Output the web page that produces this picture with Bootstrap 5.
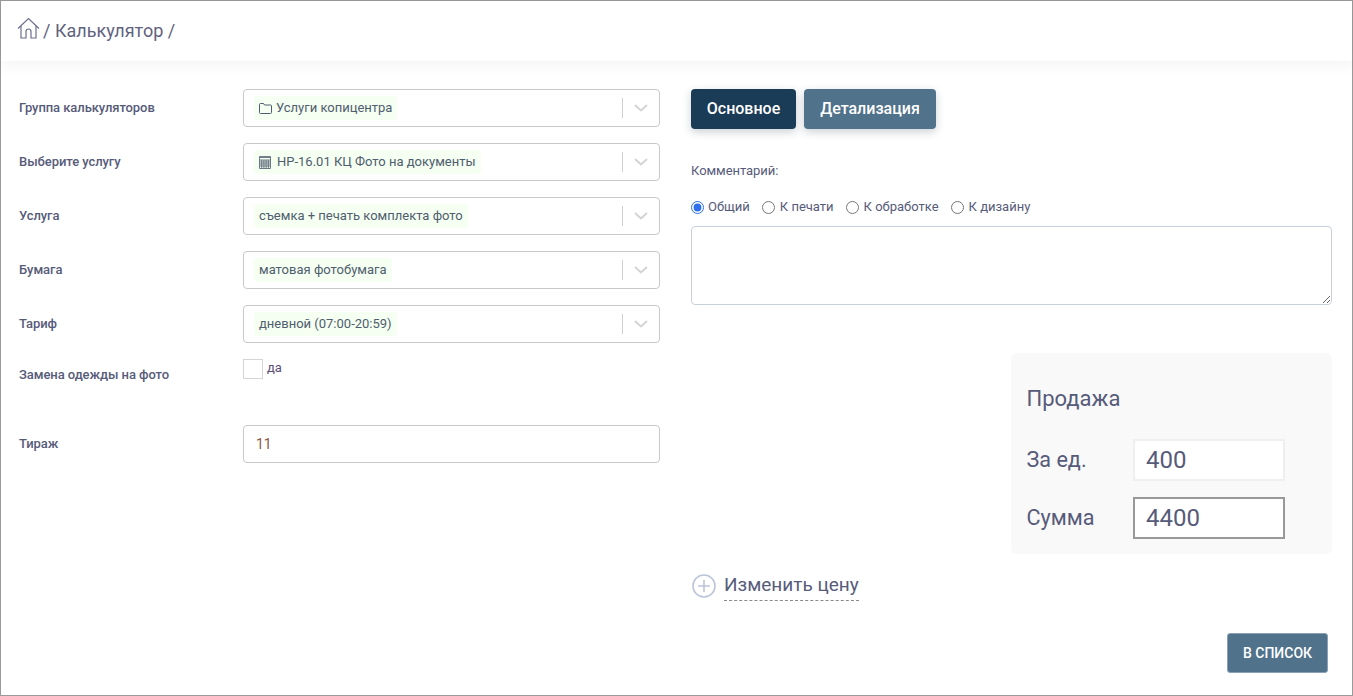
<!DOCTYPE html>
<html lang="ru">
<head>
    <meta charset="UTF-8">
    <meta name="viewport" content="width=device-width, initial-scale=1.0">
    <title>Калькулятор</title>
    <link href="https://cdn.jsdelivr.net/npm/bootstrap@5.3.0/dist/css/bootstrap.min.css" rel="stylesheet">
    <style>
        html, body { height: 100%; }
        body { font-family: Roboto, "Liberation Sans", sans-serif; color: #575962; background: #fff; overflow: hidden; }
        .page-frame { width: 1353px; height: 696px; border: 1px solid #9a9a9a; display: flex; flex-direction: column; }
        .top-bar { height: 60px; flex: none; padding: 0 0 2px 16px; box-shadow: 0 1px 15px 1px rgba(69,65,78,.08); font-size: 18px; color: #5f6380; gap: 3px; }
        .top-bar svg { display: block; margin-top: -3px; }
        .main-area { padding: 28px 20px 0 18px; gap: 31px; flex: 1; }
        .left-side { width: 641px; flex: none; }
        .right-side { width: 641px; flex: none; }
        .field-row { display: flex; margin-bottom: 16px; }
        .field-label { width: 224px; flex: none; font-size: 13px; font-weight: 500; color: #575b7a; line-height: 38px; letter-spacing: -.07px; }
        .fake-select { width: 417px; height: 38px; border: 1px solid #c9c9c9; border-radius: 4px; padding: 0 11px 0 10px; }
        .sel-value { background: #f5fff2; border-radius: 4px; padding: 0 5px; height: 24px; line-height: 24px; font-size: 13px; color: #4f5d6e; gap: 4px; }
        .calc-icon { margin-right: 2px; }
        .sel-sep { width: 1px; height: 20px; background: #d0d0d0; margin-right: 11px; }
        .check-row { height: 66px; margin-bottom: 0; }
        .check-row .field-label { line-height: 20px; padding-top: 6px; }
        .box-check { width: 20px; height: 20px; border: 1px solid #d5d5d5; background: #fff; }
        .box-label { font-size: 13px; color: #5b4f78; margin-left: 4px; line-height: 18px; }
        .qty-input { width: 417px; height: 38px; border: 1px solid #c9c9c9; border-radius: 4px; font-size: 14px; color: #8a5a44; padding: 0 12px; }
        .tab-main, .tab-second { height: 40px; border: 0; border-radius: 4px; font-size: 16px; font-weight: 500; color: #fff; box-shadow: 0 3px 8px rgba(50,70,90,.25); padding: 0; }
        .tab-main { width: 105px; background: #1a3c57; }
        .tab-second { width: 132px; background: #50728a; }
        .note-label { font-size: 13px; color: #575b7a; margin-top: 34px; line-height: 16px; letter-spacing: -.05px; }
        .radio-line { margin-top: 20px; gap: 12px; font-size: 13px; color: #575b7a; height: 16px; }
        .radio-line label { display: flex; align-items: center; gap: 5px; }
        .radio-line label:first-child { gap: 4px; }
        .radio-line input { width: 13px; height: 13px; margin: 0; accent-color: #2f6fed; }
        .note-area { display: block; width: 641px; height: 79px; margin-top: 11px; border: 1px solid #c8d0dc; border-radius: 4px; }
        .sale-panel { width: 321px; height: 201px; margin: 48px 0 0 320px; background: #f9f9f9; border-radius: 6px; padding: 32px 16px 0 15.5px; color: #575b7a; }
        .sale-title { font-size: 22px; line-height: 28px; margin-bottom: 26px; }
        .sale-row { height: 42px; margin-bottom: 16px; font-size: 21.6px; }
        .sale-row span { width: 106.5px; flex: none; }
        .sale-value { width: 152px; height: 42px; background: #fff; border: 2px solid #efefef; padding-left: 11px; font-size: 24px; line-height: 38px; }
        .sale-value.is-sum { border-color: #999; }
        .price-link { margin: 15px 0 0 1px; gap: 8px; font-size: 19px; color: #575b7a; }
        .price-link svg { margin-top: 5px; }
        .price-text { border-bottom: 1px dashed #8a8a8a; line-height: 22px; padding-bottom: 4px; margin-top: 5px; }
        .back-line { padding-top: 32px; padding-right: 4px; }
        .back-btn { width: 101px; height: 40px; background: #50728a; border: 1px solid #8aa0b8; border-radius: 3px; color: #fff; font-size: 14px; font-weight: 500; padding: 0; }
    </style>
</head>
<body>
    <div class="page-frame">
        <div class="top-bar d-flex align-items-center">
            <svg width="23" height="23" viewBox="0 0 23 23" fill="none" stroke="#6b6f8c" stroke-width="1.2">
                <path d="M1 11.5 11.5 1.5 22 11.5"/>
                <path d="M4 9v12h5v-6.500a2.500 2.500 0 0 1 5 0V21h5V9"/>
            </svg>
            <span>/ Калькулятор /</span>
        </div>

        <div class="main-area d-flex">
            <div class="left-side">
                <div class="field-row">
                    <div class="field-label">Группа калькуляторов</div>
                    <div class="fake-select d-flex align-items-center justify-content-between">
                        <div class="sel-value d-flex align-items-center">
                            <svg width="13" height="11" viewBox="0 0 13 11" fill="none" stroke="#4f5d6e"><path d="M.5 9.500v-8a1 1 0 0 1 1-1h3l1 1.500h6a1 1 0 0 1 1 1v6.500a1 1 0 0 1-1 1h-10a1 1 0 0 1-1-1z"/></svg>
                            Услуги копицентра
                        </div>
                        <div class="d-flex align-items-center">
                            <div class="sel-sep"></div>
                            <svg width="14" height="8" viewBox="0 0 14 8" fill="none" stroke="#d4d4d4" stroke-width="2"><path d="M1 1l6 5.500L13 1"/></svg>
                        </div>
                    </div>
                </div>
                <div class="field-row">
                    <div class="field-label">Выберите услугу</div>
                    <div class="fake-select d-flex align-items-center justify-content-between">
                        <div class="sel-value d-flex align-items-center">
                            <svg class="calc-icon" width="12" height="13" viewBox="0 0 12 13" fill="none" stroke="#4f5d6e" stroke-width=".8"><path d="M.5.500h11v12H.5zM.5 1.500h11M.5 4h11M.5 6h11M.5 8h11M.5 10h11M2.700 4v8.500M4.900 4v8.500M7.100 4v8.500M9.300 4v8.500"/></svg>
                            НР-16.01 КЦ Фото на документы
                        </div>
                        <div class="d-flex align-items-center">
                            <div class="sel-sep"></div>
                            <svg width="14" height="8" viewBox="0 0 14 8" fill="none" stroke="#d4d4d4" stroke-width="2"><path d="M1 1l6 5.500L13 1"/></svg>
                        </div>
                    </div>
                </div>
                <div class="field-row">
                    <div class="field-label">Услуга</div>
                    <div class="fake-select d-flex align-items-center justify-content-between">
                        <div class="sel-value">съемка + печать комплекта фото</div>
                        <div class="d-flex align-items-center">
                            <div class="sel-sep"></div>
                            <svg width="14" height="8" viewBox="0 0 14 8" fill="none" stroke="#d4d4d4" stroke-width="2"><path d="M1 1l6 5.500L13 1"/></svg>
                        </div>
                    </div>
                </div>
                <div class="field-row">
                    <div class="field-label">Бумага</div>
                    <div class="fake-select d-flex align-items-center justify-content-between">
                        <div class="sel-value">матовая фотобумага</div>
                        <div class="d-flex align-items-center">
                            <div class="sel-sep"></div>
                            <svg width="14" height="8" viewBox="0 0 14 8" fill="none" stroke="#d4d4d4" stroke-width="2"><path d="M1 1l6 5.500L13 1"/></svg>
                        </div>
                    </div>
                </div>
                <div class="field-row">
                    <div class="field-label">Тариф</div>
                    <div class="fake-select d-flex align-items-center justify-content-between">
                        <div class="sel-value">дневной (07:00-20:59)</div>
                        <div class="d-flex align-items-center">
                            <div class="sel-sep"></div>
                            <svg width="14" height="8" viewBox="0 0 14 8" fill="none" stroke="#d4d4d4" stroke-width="2"><path d="M1 1l6 5.500L13 1"/></svg>
                        </div>
                    </div>
                </div>
                <div class="field-row check-row">
                    <div class="field-label">Замена одежды на фото</div>
                    <div class="box-check"></div>
                    <div class="box-label">да</div>
                </div>
                <div class="field-row">
                    <div class="field-label">Тираж</div>
                    <input class="qty-input" type="text" value="11">
                </div>
            </div>

            <div class="right-side">
                <div class="d-flex gap-2">
                    <button class="tab-main" type="button">Основное</button>
                    <button class="tab-second" type="button">Детализация</button>
                </div>
                <div class="note-label">Комментарий:</div>
                <div class="radio-line d-flex align-items-center">
                    <label><input type="radio" name="kind" checked> Общий</label>
                    <label><input type="radio" name="kind"> К печати</label>
                    <label><input type="radio" name="kind"> К обработке</label>
                    <label><input type="radio" name="kind"> К дизайну</label>
                </div>
                <textarea class="note-area"></textarea>

                <div class="sale-panel">
                    <div class="sale-title">Продажа</div>
                    <div class="sale-row d-flex align-items-center"><span>За ед.</span><div class="sale-value">400</div></div>
                    <div class="sale-row d-flex align-items-center"><span>Сумма</span><div class="sale-value is-sum">4400</div></div>
                </div>

                <div class="price-link d-flex align-items-start">
                    <svg width="24" height="24" viewBox="0 0 24 24" fill="none" stroke="#bcc4d8" stroke-width="1.600"><circle cx="12" cy="12" r="11"/><path d="M12 6v12M6 12h12"/></svg>
                    <span class="price-text">Изменить цену</span>
                </div>

                <div class="back-line d-flex justify-content-end">
                    <button class="back-btn" type="button">В СПИСОК</button>
                </div>
            </div>
        </div>
    </div>
    <script src="https://cdn.jsdelivr.net/npm/bootstrap@5.3.0/dist/js/bootstrap.bundle.min.js"></script>
</body>
</html>
